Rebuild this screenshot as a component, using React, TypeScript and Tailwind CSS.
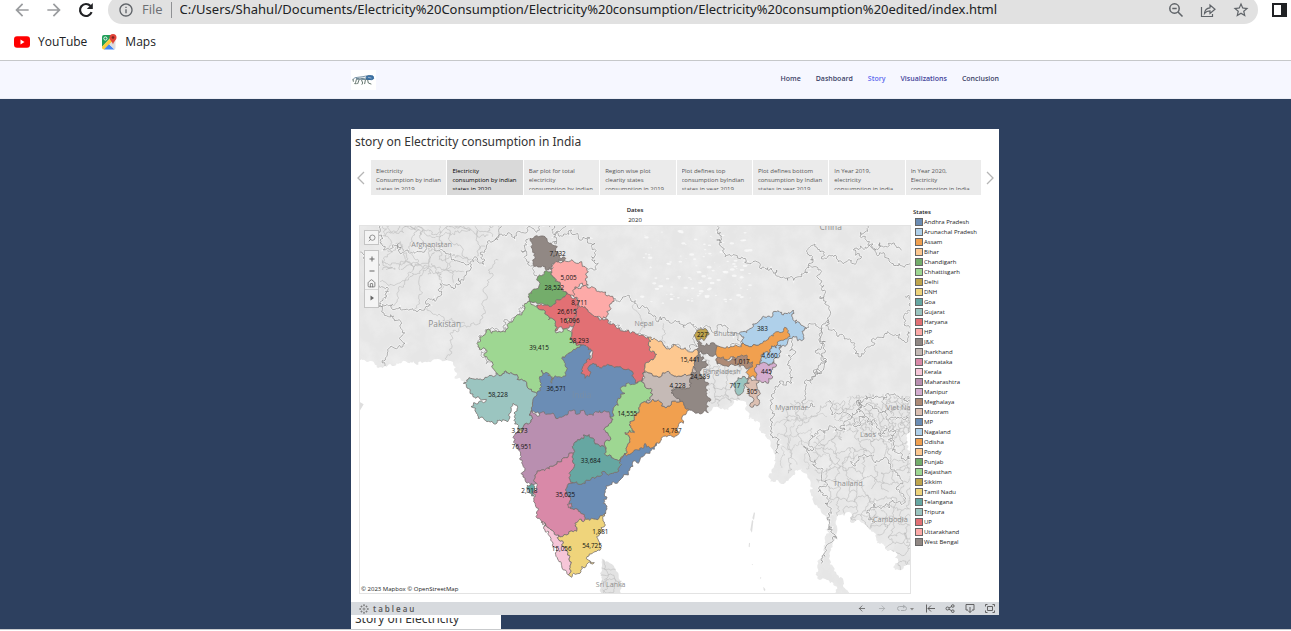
import React from "react";
import { MdArrowBack, MdArrowForward, MdStarBorder, MdInfoOutline } from "react-icons/md";
import { ArrowLeft, ArrowRight, Search, House } from "lucide-react";

type Point = [number, number];

const noise = (a: number, b: number) => {
  const v = Math.sin(a * 12.9898 + b * 78.233) * 43758.5453;
  return v - Math.floor(v) - 0.5;
};

const parse = (s: string): Point[] => s.trim().split(" ").map((p) => p.split(",").map(Number) as Point);

/* Subdivides an edge by midpoint displacement; both directions give the same line. */
const split = (a: Point, b: Point, k: number): Point[] => {
  const dx = b[0] - a[0];
  const dy = b[1] - a[1];
  const len = Math.hypot(dx, dy);
  if (len < 8) return [b];
  const n = noise(a[0] + b[0], a[1] + b[1]) * k * Math.min(1, 26 / len);
  const s = dx + dy * 0.001 > 0 ? 1 : -1;
  const m: Point = [Math.round((a[0] + b[0]) / 2 - dy * n * s), Math.round((a[1] + b[1]) / 2 + dx * n * s)];
  return [...split(a, m, k), ...split(m, b, k)];
};

const rough = (s: string, closed = false, k = 0.5) => {
  const pts = parse(s);
  if (closed) pts.push(pts[0]);
  let d = `M${pts[0]}`;
  for (let i = 1; i < pts.length; i++) d += split(pts[i - 1], pts[i], k).map((p) => `L${p}`).join("");
  return closed ? d + "Z" : d;
};

/* Irregular net of district borders. */
const mesh = (x0: number, y0: number, x1: number, y1: number, step: number) => {
  const at = (i: number, j: number) =>
    `${Math.round(x0 + i * step + noise(i + x0, j) * step)},${Math.round(y0 + j * step + noise(j + y0, i + 9) * step)}`;
  let d = "";
  for (let i = 0; x0 + i * step < x1; i++)
    for (let j = 0; y0 + j * step < y1; j++) {
      if (noise(i, j * 3) > -0.3) d += rough(`${at(i, j)} ${at(i + 1, j)}`, false, 0.8);
      if (noise(i * 5, j) > -0.3) d += rough(`${at(i, j)} ${at(i, j + 1)}`, false, 0.8);
    }
  return d;
};

const seas = [
  "0,426 60,434 90,438 125,430 190,434 262,424 275,420 300,455 298,475 325,484 360,500 420,500 500,560 560,700 600,880 650,1000 690,1000 700,880 700,780 800,700 900,640 970,560 1030,560 1060,576 1090,562 1125,560 1135,540 1158,542 1172,570 1180,597 1210,605 1225,640 1250,685 1260,712 1246,785 1264,780 1280,792 1315,765 1340,745 1365,780 1375,830 1400,880 1420,900 1423,940 1405,990 1390,1030 1395,1080 1425,1090 1452,1145 -20,1145 -20,426",
  "1515,1145 1480,1115 1465,1080 1435,1040 1425,1020 1427,985 1445,940 1450,885 1480,876 1485,905 1525,910 1555,935 1565,970 1595,990 1625,1000 1620,1050 1690,1015 1690,1145",
  "1680,625 1655,660 1658,690 1680,690",
];

const borders = [
  "12,95 50,120 80,200 100,215 92,235 70,255 120,268 180,270 210,265 215,240 260,225 270,195 305,190 335,160 345,130 390,120 395,75 420,60 440,15",
  "70,255 100,290 135,320 150,370 120,385 95,410 90,438",
  "85,15 75,60 85,90 130,70 180,100 240,85 290,120 345,130",
  "420,60 470,50 520,20 590,30 640,15",
  "520,55 515,100 535,150 565,160",
  "420,460 415,430 390,410 395,385 370,370 375,345 405,330 440,335 470,305 500,280 525,245 530,215",
  "590,70 600,40 650,30 720,70 710,110 730,130 715,150 695,145",
  "775,235 810,230 880,280 950,310 1025,330 1027,380 975,385 925,375 880,350 820,330 750,295",
  "1027,325 1060,320 1110,315 1150,340 1165,370 1090,378",
  "1085,15 1085,60 1110,110 1180,130 1230,145 1290,175 1340,170 1360,135 1400,155 1410,220 1420,300 1400,345 1400,400 1405,450 1370,470 1370,490",
  "1360,135 1360,85 1380,72 1400,110 1450,125 1490,130 1520,110 1495,90 1540,80 1580,100 1610,130 1668,130",
  "1530,15 1515,50 1560,90 1600,70 1640,90",
  "1420,300 1450,350 1500,380 1520,400 1560,370 1590,340 1640,360 1668,340",
  "1650,230 1660,270 1645,290 1668,330",
  "1345,330 1375,312 1400,325 1400,380 1385,400 1405,430 1395,460 1375,470 1345,540 1380,560",
  "1305,355 1310,450 1260,500 1250,570 1270,700",
  "1420,545 1445,580 1490,590 1510,540 1560,530 1600,520 1668,540",
  "1370,645 1410,640 1440,620 1470,630 1490,590 1500,620 1520,590 1560,600 1570,640 1620,630 1600,660 1640,700 1668,730",
  "1370,645 1375,690 1345,680 1380,720 1400,760 1400,800 1390,815 1410,850 1430,880 1432,940 1410,985 1398,1030",
  "1485,725 1510,710 1550,705 1600,720 1620,750 1640,780 1645,850 1560,850 1535,880 1560,910",
  "1520,590 1510,540 1530,560 1570,570 1620,590 1668,585",
];

const provinces = [
  "75,15 130,30 180,20 250,50 320,30 400,45",
  "180,270 195,200 205,150 240,85",
  "110,265 150,180 170,130 130,70",
  "130,190 200,150 260,150 310,110",
  "75,185 130,190",
  "275,450 290,400 285,340 320,320 375,305 390,240 400,150 430,120",
  "215,265 290,295 330,310",
  "260,225 260,180 230,130",
  "1320,540 1330,640 1350,680",
  "1290,590 1340,600 1420,545",
  "840,250 870,310 850,340",
  "925,310 930,370",
  "1300,560 1290,640 1310,700 1300,760",
];

interface StateShape {
  fill: string;
  pts: string;
}

const BLUE = "#6b8db5";
const SKY = "#afd0ea";
const ORANGE = "#f1a04f";
const PEACH = "#fdc890";
const GREEN = "#74ad6b";
const LIME = "#9ed792";
const OLIVE = "#bfa54c";
const YELLOW = "#efd47b";
const TEAL = "#66a7a2";
const AQUA = "#9bc5c0";
const RED = "#e27074";
const SALMON = "#fdaaa8";
const GREY = "#918884";
const STONE = "#c5bab6";
const ROSE = "#d989a8";
const PINK = "#f6c6d8";
const PLUM = "#b98fb0";
const LILAC = "#d4adcf";
const BROWN = "#ad8a76";
const SAND = "#dcc0b2";

const shapes: StateShape[] = [
  { fill: BLUE, pts: "620,415 650,395 680,375 710,390 705,425 690,440 705,435 740,443 765,436 790,440 835,460 862,480 860,500 820,510 810,520 790,535 775,570 765,590 740,590 690,590 665,595 640,595 610,600 560,590 530,575 530,570 533,545 530,510 545,480 550,450 580,450 590,480 615,465 625,450" },
  { fill: GREY, pts: "525,55 545,47 570,50 590,72 607,80 612,105 632,115 625,128 598,130 592,148 575,150 545,138 533,120 540,100 528,80" },
  { fill: SALMON, pts: "598,130 625,125 640,125 660,128 680,125 695,145 692,165 700,195 668,202 660,225 640,222 615,200 600,175 590,155" },
  { fill: GREEN, pts: "575,152 590,155 600,175 615,200 632,215 630,230 610,240 600,252 570,255 555,250 527,245 530,220 550,205 545,180 550,168 565,165" },
  { fill: RED, pts: "668,255 690,260 700,275 740,297 780,315 820,330 858,345 880,352 880,375 898,395 900,412 870,435 863,460 862,475 855,490 840,487 835,460 790,440 765,436 740,443 705,435 698,445 702,470 690,475 678,460 690,430 705,420 710,390 680,375 655,370 650,345 655,320 650,300" },
  { fill: RED, pts: "632,215 648,232 665,232 668,255 655,275 650,300 655,320 635,325 620,320 600,333 600,310 580,300 575,285 560,270 548,255 570,255 600,252 610,240 630,230" },
  { fill: SALMON, pts: "662,200 690,195 710,200 740,215 775,235 770,250 755,275 740,297 725,290 700,275 690,260 672,258 665,232" },
  { fill: LIME, pts: "527,245 548,255 560,270 575,285 580,300 600,310 600,333 635,325 650,345 655,370 680,375 650,395 620,415 635,450 632,468 610,470 590,490 580,460 560,450 555,480 560,500 545,520 515,495 500,478 480,465 425,460 415,435 390,410 395,390 370,375 375,350 405,330 410,340 440,335 460,310 500,285 515,250" },
  { fill: AQUA, pts: "325,490 335,480 370,478 390,472 415,470 425,460 480,465 500,478 515,495 545,520 533,545 530,570 528,600 515,610 505,630 490,630 478,590 480,555 474,550 468,575 465,590 440,605 418,612 385,595 348,560 356,548 385,548 394,538 370,530 345,520" },
  { fill: PLUM, pts: "530,570 560,577 610,595 640,575 665,583 690,578 740,578 765,590 755,620 765,650 750,665 752,690 735,680 715,655 685,645 675,660 665,665 655,700 620,725 600,735 575,745 560,750 540,765 545,790 520,800 510,780 505,740 490,690 482,640 490,630 505,630 515,610 528,600" },
  { fill: LIME, pts: "775,570 790,535 810,520 800,500 845,490 860,485 875,505 893,525 875,548 845,580 825,605 838,638 810,638 820,670 815,700 795,720 775,715 752,690 750,665 765,650 755,620 765,590" },
  { fill: BLUE, pts: "655,788 690,790 720,775 750,755 790,745 795,720 835,695 870,670 905,665 905,672 885,700 850,730 825,745 820,765 780,790 765,795 750,810 745,850 752,880 710,895 690,905 688,890 675,875 645,865 640,830 635,815" },
  { fill: TEAL, pts: "685,645 715,655 735,680 752,690 775,715 795,720 790,745 750,755 720,775 690,790 655,788 655,745 655,700 665,665 675,660" },
  { fill: ROSE, pts: "655,700 655,745 655,788 635,815 640,830 645,865 675,875 688,890 685,905 660,910 655,935 635,945 610,945 575,920 557,900 550,865 540,830 530,815 545,790 540,765 560,750 575,745 600,735 620,725" },
  { fill: ROSE, pts: "637,853 650,850 652,860 640,863" },
  { fill: TEAL, pts: "517,795 540,800 538,830 530,828" },
  { fill: PINK, pts: "560,905 575,920 610,945 625,970 630,985 645,1010 640,1065 625,1050 612,1025 605,990 585,950" },
  { fill: YELLOW, pts: "610,945 635,945 655,935 660,910 685,905 710,895 752,880 748,910 735,940 738,985 720,995 700,1020 718,1028 700,1028 680,1040 675,1060 650,1072 640,1065 645,1010 630,985 625,970" },
  { fill: ORANGE, pts: "825,605 845,580 875,548 915,545 920,558 945,558 975,545 990,560 1003,570 985,585 985,610 970,635 935,650 910,670 885,685 870,670 855,690 835,695 795,720 815,700 820,670 810,638 838,638" },
  { fill: STONE, pts: "863,460 905,468 935,455 965,470 990,462 1015,440 1025,455 1010,490 975,505 950,510 970,535 975,545 945,558 920,558 915,545 875,548 893,525 875,505 860,485" },
  { fill: PEACH, pts: "880,352 905,360 925,375 975,385 1025,388 1030,400 1020,420 1015,440 990,462 965,470 935,455 905,468 863,460 870,435 900,412 898,395 880,375" },
  { fill: GREY, pts: "1025,362 1055,370 1090,380 1087,405 1055,400 1040,393 1032,400 1040,425 1060,435 1040,445 1035,460 1050,475 1058,510 1060,560 1060,578 1050,570 1042,580 1030,578 1003,570 990,560 975,545 970,535 950,510 975,505 1010,490 1025,455 1015,440 1020,420 1030,400 1025,388" },
  { fill: OLIVE, pts: "1027,330 1050,325 1055,350 1047,362 1025,360" },
  { fill: SKY, pts: "1152,340 1175,338 1205,310 1255,275 1285,285 1315,270 1325,300 1322,310 1355,325 1345,350 1340,362 1325,350 1305,355 1280,378 1260,390 1215,372 1165,370" },
  { fill: ORANGE, pts: "1087,378 1165,370 1215,372 1245,350 1275,338 1300,332 1305,350 1275,362 1250,378 1240,400 1215,430 1203,475 1175,478 1185,440 1175,408 1135,410 1087,432" },
  { fill: BROWN, pts: "1090,412 1135,410 1175,405 1178,420 1193,440 1155,440 1115,438 1087,432" },
  { fill: SKY, pts: "1277,375 1275,408 1257,425 1225,430 1215,430 1220,412 1240,400 1250,378" },
  { fill: LILAC, pts: "1213,435 1230,428 1255,425 1263,440 1253,470 1240,490 1203,482" },
  { fill: SAND, pts: "1180,475 1203,480 1213,485 1213,515 1205,558 1190,562 1183,520" },
  { fill: AQUA, pts: "1137,490 1170,470 1175,490 1155,525 1140,512" },
  { fill: YELLOW, pts: "632,298 640,293 645,302 636,307" },
  { fill: YELLOW, pts: "488,628 500,626 502,636 492,636" },
];

const values: [number, number, string][] = [
  [608, 108, "7,732"], [641, 180, "5,005"], [598, 211, "28,522"], [673, 255, "8,711"], [636, 283, "26,615"],
  [644, 310, "16,096"], [672, 369, "58,293"], [552, 389, "39,415"], [604, 513, "36,571"], [429, 531, "58,228"],
  [494, 638, "3,273"], [500, 688, "76,951"], [523, 819, "2,018"], [631, 831, "35,625"], [707, 729, "33,684"],
  [736, 942, "1,881"], [711, 984, "54,725"], [620, 993, "15,056"], [817, 589, "14,555"], [950, 639, "14,787"],
  [968, 504, "4,228"], [1035, 477, "24,589"], [1005, 425, "15,441"], [1042, 352, "227"], [1222, 333, "383"],
  [1244, 414, "4,660"], [1160, 431, "1,017"], [1234, 463, "445"], [1140, 504, "717"], [1191, 522, "305"],
];

const countries: [number, number, string, number][] = [
  [230, 80, "Afghanistan", 22], [269, 321, "Pakistan", 25], [680, 533, "India", 25], [867, 318, "Nepal", 21],
  [1112, 347, "Bhutan", 21], [1100, 462, "Bangladesh", 21], [1427, 30, "China", 25], [1309, 570, "Myanmar", 22],
  [1539, 652, "Laos", 22], [1640, 571, "Viet Nam", 22], [1479, 797, "Thailand", 22], [1606, 906, "Cambodia", 22],
  [767, 1100, "Sri Lanka", 21],
];

const speckles = Array.from({ length: 120 }, (_, i) => ({
  x: 860 + (noise(i, 1) + 0.5) * 330,
  y: 30 + (noise(i, 2) + 0.5) * 220,
  r: 2 + (noise(i, 3) + 0.5) * 6,
}));

function IndiaMap() {
  return (
    <svg viewBox="12 15 1656 1107" className="block h-auto w-full" role="img" aria-label="Consumption by state, 2020">
      <defs>
        <clipPath id="north-west"><path d="M80 15H440L395 75 390 120 345 130 300 190 180 150 80 150Z" /></clipPath>
        <clipPath id="south-east"><path d="M1375 650L1420 640 1520 590 1560 600 1680 570V1050L1620 1050 1560 930 1485 905 1480 876 1445 890 1380 770Z" /></clipPath>
        <clipPath id="viet"><path d="M1420 545L1530 520 1680 530V640L1600 660 1500 620 1440 600Z" /></clipPath>
        <clipPath id="east-bengal"><path d="M1040 390L1087 435 1185 440 1140 490 1155 540 1070 565 1055 470 1040 445Z" /></clipPath>
        <clipPath id="lanka"><path d="M740 1015L765 1030 790 1060 805 1095 790 1122H745L735 1060Z" /></clipPath>
        <filter id="relief" x="0" y="0" width="100%" height="100%">
          <feTurbulence type="fractalNoise" baseFrequency="0.018" numOctaves="4" seed="4" />
          <feColorMatrix values="0 0 0 0 1  0 0 0 0 1  0 0 0 0 1  1.6 0 0 0 -0.55" />
        </filter>
      </defs>
      <rect x="12" y="15" width="1656" height="1107" fill="#e6e6e6" />
      <rect x="12" y="15" width="1656" height="1107" filter="url(#relief)" opacity="0.35" />
      {speckles.map((s, i) => (
        <ellipse key={i} cx={s.x} cy={s.y} rx={s.r} ry={s.r * 0.5} fill="#fafafa" opacity="0.8" />
      ))}
      <g fill="none" stroke="#b8b8b8" strokeWidth="1.6">
        <path clipPath="url(#north-west)" d={mesh(60, 0, 450, 200, 38)} />
        <path clipPath="url(#south-east)" d={mesh(1360, 580, 1680, 1060, 28)} />
        <path clipPath="url(#viet)" d={mesh(1420, 510, 1680, 660, 20)} />
        <path clipPath="url(#east-bengal)" d={mesh(1030, 380, 1190, 570, 28)} />
        <path d={mesh(1270, 560, 1360, 720, 42)} stroke="#c4c4c4" />
        {provinces.map((p) => <path key={p} d={rough(p, false, 0.8)} />)}
      </g>
      {seas.map((p) => <path key={p} d={rough(p, true, 0.7)} fill="#fff" />)}
      <path d={rough("740,1015 765,1030 790,1060 805,1095 790,1125 745,1125 735,1060", true)} fill="#e3e3e3" />
      <path clipPath="url(#lanka)" d={mesh(730, 1010, 810, 1130, 26)} fill="none" stroke="#b9b9b9" strokeWidth="1.6" />
      <path fill="#dedede" d="M1197 876l3 4-3 20-5-5zM1191 900l4 3-4 35-5-8zM1182 968l3 2-1 12-3-2zM1190 1032l4 1-2 3zM1215 1071l4 2-2 5zM1225 1100l6 8-1 6-4-4zM13 545l13 8-12 20z" />
      <g fill="none">
        {borders.map((p) => <path key={p} d={rough(p, false, 1.1)} stroke="#f6f6f6" strokeWidth="6" />)}
        {borders.map((p) => <path key={p} d={rough(p, false, 1.1)} stroke="#929292" strokeWidth="2.2" />)}
      </g>
      <g stroke="#77706d" strokeWidth="2.4" strokeLinejoin="round">
        {shapes.map((s) => <path key={s.pts} d={rough(s.pts, true, 0.8)} fill={s.fill} />)}
      </g>
      <g textAnchor="middle" fontFamily="'Open Sans', sans-serif" fill="#8e8e8e">
        {countries.map(([x, y, name, size]) => (
          <text key={name} x={x} y={y} fontSize={size} opacity={name === "India" ? 0.35 : 1}>{name}</text>
        ))}
      </g>
      <g textAnchor="middle" fontFamily="'Open Sans', sans-serif" fontSize="19" fill="#111">
        {values.map(([x, y, v]) => <text key={v} x={x} y={y}>{v}</text>)}
      </g>
    </svg>
  );
}

const tabs = [
  ["Electricity", "Consumption by indian", "states in 2019"],
  ["Electricity", "consumption by indian", "states in 2020"],
  ["Bar plot for total", "electricity", "consumption by indian"],
  ["Region wise plot", "clearity states", "consumption in 2019"],
  ["Plot defines top", "consumption byIndian", "states in year  2019"],
  ["Plot defines bottom", "consumption by Indian", "states in year 2019"],
  ["In Year 2019,", "electricity", "consumption in india"],
  ["In Year 2020,", "Electricity", "consumption in India"],
];

const legend: [string, string][] = [
  ["Andhra Pradesh", "bg-[#6b8db5]"], ["Arunachal Pradesh", "bg-[#afd0ea]"], ["Assam", "bg-[#f1a04f]"],
  ["Bihar", "bg-[#fdc890]"], ["Chandigarh", "bg-[#74ad6b]"], ["Chhattisgarh", "bg-[#9ed792]"],
  ["Delhi", "bg-[#bfa54c]"], ["DNH", "bg-[#efd47b]"], ["Goa", "bg-[#66a7a2]"], ["Gujarat", "bg-[#9bc5c0]"],
  ["Haryana", "bg-[#e27074]"], ["HP", "bg-[#fdaaa8]"], ["J&K", "bg-[#918884]"], ["Jharkhand", "bg-[#c5bab6]"],
  ["Karnataka", "bg-[#d989a8]"], ["Kerala", "bg-[#f6c6d8]"], ["Maharashtra", "bg-[#b98fb0]"],
  ["Manipur", "bg-[#d4adcf]"], ["Meghalaya", "bg-[#ad8a76]"], ["Mizoram", "bg-[#dcc0b2]"], ["MP", "bg-[#6b8db5]"],
  ["Nagaland", "bg-[#afd0ea]"], ["Odisha", "bg-[#f1a04f]"], ["Pondy", "bg-[#fdc890]"], ["Punjab", "bg-[#74ad6b]"],
  ["Rajasthan", "bg-[#9ed792]"], ["Sikkim", "bg-[#bfa54c]"], ["Tamil Nadu", "bg-[#efd47b]"],
  ["Telangana", "bg-[#66a7a2]"], ["Tripura", "bg-[#9bc5c0]"], ["UP", "bg-[#e27074]"],
  ["Uttarakhand", "bg-[#fdaaa8]"], ["West Bengal", "bg-[#918884]"],
];

function YouTubeIcon() {
  return (
    <svg viewBox="0 0 16 12" className="h-3 w-4"><rect width="16" height="11.5" y=".3" rx="3" fill="#f00" /><path d="M6.5 3.6v4.8L10.5 6z" fill="#fff" /></svg>
  );
}

function MapsIcon() {
  return (
    <svg viewBox="0 0 16 16" className="size-4">
      <path d="M1 3a2 2 0 0 1 2-2h9l-11 12z" fill="#1e9e58" />
      <path d="M1 12.5L11.5 2l3 3-11 10.5H3a2 2 0 0 1-2-2z" fill="#f9cb3d" />
      <path d="M3 15.5l5-5.2 5.6 5.2z" fill="#4285f4" />
      <path d="M8.2 10.2L13 6l1.5 1v6.8a1.6 1.6 0 0 1-1 1.6z" fill="#dedede" />
      <path d="M12 0a3.5 3.5 0 0 1 3.5 3.5c0 2.500-2.600 3.500-3.500 7-1-3.500-3.500-4.500-3.500-7A3.500 3.500 0 0 1 12 0z" fill="#e0443a" />
      <circle cx="12" cy="3.5" r="1.3" fill="#7b231e" />
      <circle cx="4.4" cy="4.5" r="1.6" fill="none" stroke="#fff" strokeWidth=".9" />
    </svg>
  );
}

function BrowserBar() {
  return (
    <header className="overflow-hidden border-b border-[#c6c8ca] bg-white font-['Open_Sans',sans-serif] text-[#202124]">
      <div className="-mt-1 flex h-7 items-center">
        <div className="flex w-[108px] shrink-0 items-center gap-3 pl-3">
          <button aria-label="Back" className="text-[#9a9c9f]"><MdArrowBack size={20} /></button>
          <button aria-label="Forward" className="text-[#9a9c9f]"><MdArrowForward size={20} /></button>
          <button aria-label="Reload">
            <svg viewBox="0 0 20 20" className="size-5" fill="none" stroke="currentColor" strokeWidth="2.2"><path d="M15.600 12.200A6 6 0 1 1 14.500 6" /><path d="M16.800 3v6h-6z" fill="currentColor" stroke="none" /></svg>
          </button>
        </div>
        <div className="flex h-7 min-w-0 flex-1 items-center rounded-full bg-[#e1e1e1] pl-2.5 pr-2 text-[13px]">
          <MdInfoOutline size={16} className="shrink-0 text-[#5f6368]" />
          <span className="shrink-0 pl-2 text-[#6b6e72]">File</span>
          <span className="mx-2 h-4 w-px shrink-0 bg-[#8f9194]" />
          <input aria-label="Address" readOnly className="min-w-0 flex-1 bg-transparent font-['Noto_Sans',sans-serif] outline-none" value="C:/Users/Shahul/Documents/Electricity%20Consumption/Electricity%20consumption/Electricity%20consumption%20edited/index.html" />
          <span className="flex shrink-0 gap-4 text-[#5f6368]">
            <button aria-label="Zoom">
              <svg viewBox="0 0 16 16" className="size-4" fill="none" stroke="currentColor" strokeWidth="1.5"><circle cx="6.5" cy="6.5" r="4.7" /><path d="M10 10l4.5 4.5M4.3 6.5h4.4" /></svg>
            </button>
            <button aria-label="Share">
              <svg viewBox="0 0 16 16" className="size-4" fill="none" stroke="currentColor" strokeWidth="1.2"><path d="M1.500 5v9.500h11V12" /><path d="M4.500 11.500c.3-4 2.700-5.500 5.500-5.700V3l5 4.200-5 4.300V8.800c-2.500 0-4 .7-5.500 2.700z" /></svg>
            </button>
            <button aria-label="Bookmark"><MdStarBorder size={18} /></button>
          </span>
        </div>
        <button aria-label="Side panel" className="ml-3.5 mr-1 flex h-[14px] w-[15px] justify-end border-2 border-[#202124] bg-white"><span className="h-full w-1 bg-[#202124]" /></button>
      </div>
      <div className="flex h-9 items-center gap-[14px] pl-3.5 text-[12px]">
        <a href="#youtube" className="flex items-center gap-2"><YouTubeIcon />YouTube</a>
        <a href="#maps" className="flex items-center gap-2"><MapsIcon />Maps</a>
      </div>
    </header>
  );
}

function Lion() {
  return (
    <svg viewBox="0 0 75 60" className="h-5 w-[25px] bg-white">
      <g fill="none" strokeLinecap="round" strokeLinejoin="round">
        <path d="M6 28q5-7 14-6l16-2q8-2 16-3" stroke="#7b95a8" strokeWidth="3" />
        <path d="M18 26l32 1 8-2" stroke="#6d8794" strokeWidth="6" />
        <path d="M46 20q8-6 20-2l2 8-6 3-14-1z" stroke="#35699a" strokeWidth="3" fill="#3f74a8" />
        <path d="M16 29l-2 8-3 4h5M24 30l-4 11M32 31l3 8-2 4M43 31l-2 10M50 30l2 9 8 3M6 28l1 6" stroke="#66776f" strokeWidth="3" />
        <path d="M24 24l6 3m8-3l6 2m8-4l8 2" stroke="#c3ced4" strokeWidth="2" />
      </g>
    </svg>
  );
}

function SiteNav() {
  const links: [string, string][] = [
    ["Home", "text-[#3b3f66]"], ["Dashboard", "text-[#3b3f66]"], ["Story", "text-[#5b68ee]"],
    ["Visualizations", "text-[#43429a]"], ["Conclusion", "text-[#3b3f66]"],
  ];
  return (
    <nav className="grid grid-cols-[351fr_648fr_292fr] border-b border-[#eceef5] bg-[#f6f7ff]">
      <div className="col-start-2 flex h-[37px] items-center justify-between">
        <Lion />
        <div className="flex gap-[15px] pb-0.5 font-['Open_Sans',sans-serif] text-[7px] font-semibold leading-[10px]">
          {links.map(([name, color]) => <a key={name} href={`#${name}`} className={color}>{name}</a>)}
        </div>
      </div>
    </nav>
  );
}

function MapControls() {
  const cell = "flex h-3 items-center justify-center";
  return (
    <div className="absolute left-[5px] top-[5px] flex w-[15px] flex-col gap-[5px] text-[#666]">
      <button aria-label="Search map" className="flex h-[15px] items-center justify-center border border-[#c4c4c4] bg-[#f4f4f4]"><Search size={8} strokeWidth={2} className="-scale-x-100" /></button>
      <div className="flex flex-col border border-[#c4c4c4] bg-[#f4f4f4] py-0.5">
        <button aria-label="Zoom in" className={cell}><svg viewBox="0 0 8 8" className="size-2" stroke="currentColor"><path d="M4 1.5v5M1.5 4h5" /></svg></button>
        <button aria-label="Zoom out" className={cell}><svg viewBox="0 0 8 8" className="size-2" stroke="currentColor"><path d="M1.5 4h5" /></svg></button>
        <button aria-label="Reset view" className={cell}><House size={9} strokeWidth={2} /></button>
        <button aria-label="Map tools" className="flex h-4 items-center justify-center border-t border-[#d6d6d6]"><svg viewBox="0 0 8 8" className="size-2" fill="currentColor"><path d="M2.5 1.5v5L6 4z" /></svg></button>
      </div>
    </div>
  );
}

function TableauBar() {
  const icon = "h-[9px] w-[10px]";
  const p = { fill: "none", stroke: "currentColor", strokeWidth: 0.9, viewBox: "0 0 10 9", className: icon };
  return (
    <footer className="flex h-[13px] items-center bg-[#d7dade] pl-2 pr-1 text-[#555]">
      <a href="#tableau" className="flex items-center gap-1 text-[8px] font-semibold leading-[12px] tracking-[2px]">
        <svg viewBox="0 0 10 10" className="size-2.5" stroke="#777" strokeWidth=".8"><path d="M5 3.5v3M3.5 5h3M5 .2v2M4 1.2h2M5 7.8v2M4 8.8h2M1.2 4v2M.2 5h2M8.8 4v2M7.8 5h2M2.5 1.5v2M1.5 2.5h2M7.5 1.5v2M6.5 2.5h2M2.5 6.5v2M1.5 7.5h2M7.5 6.5v2M6.5 7.5h2" /></svg>
        tableau
      </a>
      <div className="ml-auto flex items-center gap-2.5">
        <button aria-label="Undo"><ArrowLeft className={icon} /></button>
        <button aria-label="Redo" className="text-[#a4a7aa]"><ArrowRight className={icon} /></button>
        <button aria-label="Replay" className="flex items-center gap-0.5 text-[#a4a7aa]">
          <svg {...p}><path d="M2.500 6.500A2 2 0 0 1 2.500 2.500h5M6 1l2 1.500L6 4M7.500 2.500a2 2 0 0 1 0 4H4" /></svg>
          <svg viewBox="0 0 6 4" className="h-1 w-1.5 text-[#888]" fill="currentColor"><path d="M1 1h4L3 3.5z" /></svg>
        </button>
        <button aria-label="Revert"><svg {...p}><path d="M1.5 .5v8M10 4.500H3M6 1.500L3 4.500l3 3" /></svg></button>
        <button aria-label="Share"><svg {...p}><circle cx="2.5" cy="4.5" r="1.5" /><circle cx="7.8" cy="2" r="1.3" /><circle cx="7.8" cy="7.2" r="1.3" /><path d="M4 4l2.700-1.500M4 5.300l2.700 1.400" /></svg></button>
        <button aria-label="Download"><svg {...p}><path d="M3 6H1V.5h8V6H7M5 3v5.500M3 6.500l2 2 2-2" /></svg></button>
        <button aria-label="Full screen"><svg {...p}><path d="M.5 2.500v-2h2M7.500 .5h2v2M9.500 6.500v2h-2M2.500 8.500h-2v-2M2.500 2.500h5v4h-5z" /></svg></button>
      </div>
    </footer>
  );
}

function Story() {
  const chevron = "flex shrink-0 items-center justify-center text-[#b5b5b5]";
  return (
    <section className="bg-white font-['Open_Sans',sans-serif]">
      <h1 className="h-[31px] pl-1 pt-1 font-['Noto_Sans',sans-serif] text-[12px] leading-[18px] text-[#333]">story on Electricity consumption in India</h1>
      <div className="flex h-[35px]">
        <button aria-label="Previous" className={`w-5 ${chevron}`}><svg viewBox="0 0 8 14" className="h-3.5 w-2" fill="none" stroke="currentColor" strokeWidth="1.3"><path d="M7 1L1 7l6 6" /></svg></button>
        <div className="flex min-w-0 flex-1 gap-px">
          {tabs.map((lines, i) => (
            <button key={i} className={`min-w-0 flex-1 overflow-hidden pl-[5px] pt-[7px] text-left text-[6px] leading-[9px] ${i === 1 ? "bg-[#d9d9d9] text-black" : "bg-[#ebebeb] text-[#555]"}`}>
              <span className="block h-[23px] overflow-hidden">
                {lines.map((l) => <span key={l} className="block whitespace-nowrap">{l}</span>)}
              </span>
              <span className="block h-[5px]" />
            </button>
          ))}
        </div>
        <button aria-label="Next" className={`w-[18px] ${chevron}`}><svg viewBox="0 0 8 14" className="h-3.5 w-2" fill="none" stroke="currentColor" strokeWidth="1.3"><path d="M1 1l6 6-6 6" /></svg></button>
      </div>
      <div className="flex pb-2 pl-2 pt-2.5">
        <div className="min-w-0 flex-1">
          <div className="text-center text-[6px] leading-[10px] text-[#222]">
            <p className="font-semibold">Dates</p>
            <p>2020</p>
          </div>
          <div className="relative outline outline-1 -outline-offset-1 outline-[#e3e3e3]">
            <IndiaMap />
            <MapControls />
            <p className="absolute bottom-0 left-0.5 text-[6px] leading-[10px] text-[#222]">© 2023 Mapbox © OpenStreetMap</p>
          </div>
        </div>
        <aside className="w-[88px] shrink-0 pl-0.5 pt-0.5 text-[6px] leading-[10px] text-[#222]">
          <h2 className="font-semibold">States</h2>
          <ul className="pl-0.5">
            {legend.map(([name, color]) => (
              <li key={name} className="flex items-center gap-px"><span className={`size-2 border border-[#666] ${color}`} />{name}</li>
            ))}
          </ul>
        </aside>
      </div>
      <TableauBar />
    </section>
  );
}

export default function App() {
  return (
    <div className="flex min-h-screen flex-col bg-white">
      <BrowserBar />
      <SiteNav />
      <main className="grid grid-cols-[351fr_648fr_292fr] border-b border-[#c9cbcd] bg-[#2d405f] pt-[30px]">
        <div className="col-start-2">
          <Story />
          <div className="w-[150px] bg-white pt-[3px]">
            <div className="h-[11px] overflow-hidden">
              <h2 className="-mt-2 pl-1 font-['Noto_Sans',sans-serif] text-[12px] leading-[18px] text-[#333]">Story on Electricity</h2>
            </div>
          </div>
        </div>
      </main>
    </div>
  );
}
